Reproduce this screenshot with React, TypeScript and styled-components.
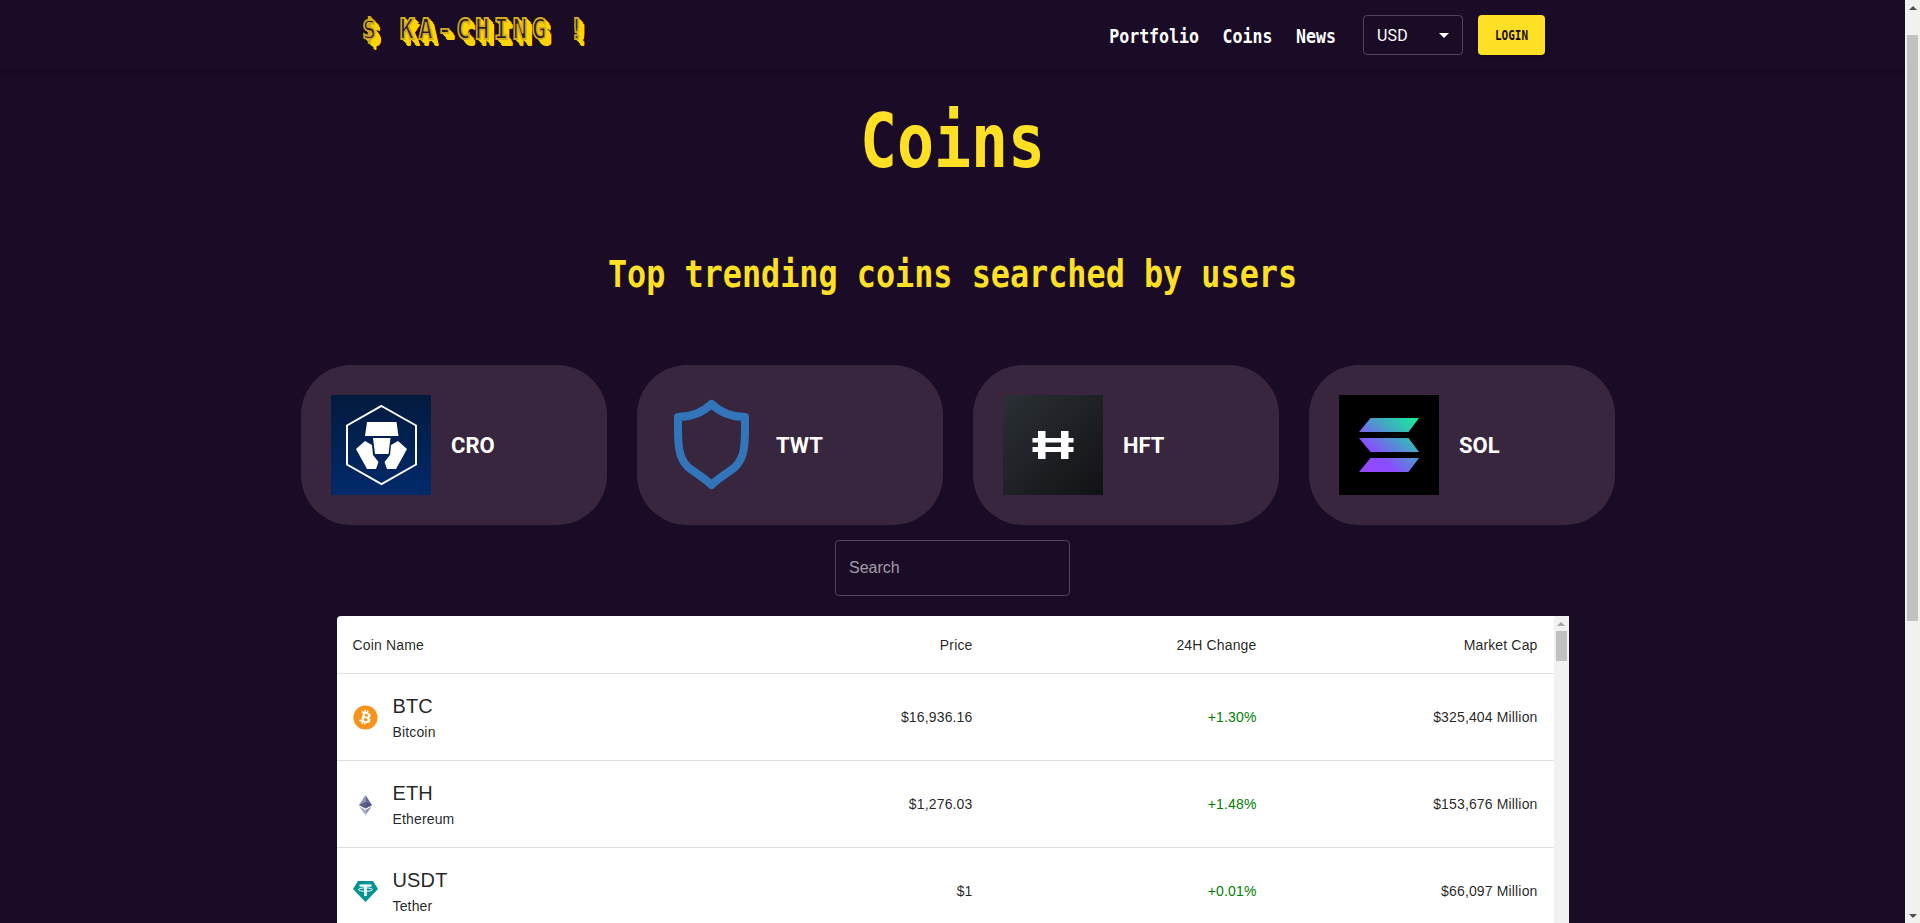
import React from "react";
import styled, { createGlobalStyle } from "styled-components";
import { FaBitcoin } from "react-icons/fa";

const Global = createGlobalStyle`
  html, body { height: 100%; }
  body { margin: 0; overflow: hidden; background: #1a0b26; font-family: "Liberation Sans", Arial, sans-serif; }
  * { box-sizing: border-box; }
`;

const PIXEL = `"DejaVu Sans Mono", "Liberation Mono", monospace`;
const YELLOW = "#ffe024";

const Shell = styled.div`
  height: 923px;
  display: flex;
  overflow: hidden;
`;

const Page = styled.div`
  flex: 1;
  min-width: 0;
  display: flex;
  flex-direction: column;
`;

const ScrollTrack = styled.div`
  flex: none;
  width: 15px;
  height: 100%;
  display: flex;
  flex-direction: column;
  align-items: center;
  background: #f1f1f1;
`;

const ArrowCell = styled.div`
  flex: none;
  width: 15px;
  height: 15px;
  display: flex;
  align-items: center;
  justify-content: center;
`;

const ArrowUp = styled.span<{ $color: string }>`
  width: 0;
  height: 0;
  border-left: 4px solid transparent;
  border-right: 4px solid transparent;
  border-bottom: 4px solid ${(p) => p.$color};
`;

const ArrowDown = styled.span<{ $color: string }>`
  width: 0;
  height: 0;
  border-left: 4px solid transparent;
  border-right: 4px solid transparent;
  border-top: 4px solid ${(p) => p.$color};
`;

const ThumbArea = styled.div`
  flex: 1;
  min-height: 0;
  align-self: stretch;
  display: flex;
  flex-direction: column;
  align-items: center;
`;

const Thumb = styled.div<{ $top: number; $height: number }>`
  flex: none;
  width: 11px;
  height: ${(p) => p.$height}px;
  margin-top: ${(p) => p.$top}px;
  background: #c1c1c1;
`;

const Header = styled.header`
  flex: none;
  height: 70px;
  display: flex;
  align-items: center;
  justify-content: space-between;
  padding: 0 360px 0 362px;
  background: #1a0b26;
  box-shadow: 0 2px 3px rgba(0, 0, 0, 0.18);
`;

const Logo = styled.div`
  font-family: ${PIXEL};
  font-weight: 700;
  font-size: 24px;
  letter-spacing: 4.4px;
  white-space: pre;
  color: #2a1a33;
  -webkit-text-stroke: 1.5px #d4ab1f;
  text-shadow: 1px 0 0 #ffd500, 1px 1px 0 #ffd500, 2px 1px 0 #ffd500, 2px 2px 0 #ffd500, 3px 2px 0 #ffd500, 3px 3px 0 #ffd500,
    4px 3px 0 #ffd500, 4px 4px 0 #ffd500, 5px 4px 0 #ffd500, 5px 5px 0 #ffd500, 6px 5px 0 #ffd500, 6px 6px 0 #ffd500;
  transform: scaleY(1.2) translateY(-5px);
`;

const Actions = styled.div`
  display: flex;
  align-items: center;
`;

const Nav = styled.nav`
  display: flex;
  gap: 23.5px;
  margin-right: 27px;
`;

const NavLink = styled.a`
  font-family: ${PIXEL};
  font-weight: 700;
  font-size: 16.6px;
  color: #fff;
  display: inline-block;
  transform: scaleY(1.16);
  margin-top: 2px;
`;

const CurrencySelect = styled.button`
  width: 100px;
  height: 40px;
  display: flex;
  align-items: center;
  justify-content: space-between;
  padding: 0 14px 0 13px;
  background: transparent;
  border: 1px solid rgba(255, 255, 255, 0.23);
  border-radius: 4px;
  color: #fff;
  font: 400 16px Roboto, sans-serif;
  letter-spacing: 0.15px;
  margin-right: 15px;
`;

const Caret = styled.span`
  width: 0;
  height: 0;
  border-left: 5px solid transparent;
  border-right: 5px solid transparent;
  border-top: 5px solid #fff;
  margin-right: -1px;
`;

const LoginButton = styled.button`
  width: 67px;
  height: 40px;
  border: 0;
  border-radius: 4px;
  background: ${YELLOW};
  color: #1a0b26;
  box-shadow: 0 2px 3px rgba(0, 0, 0, 0.25);
  font-family: ${PIXEL};
  font-weight: 700;
  font-size: 11px;
  padding: 0;
`;

const LoginLabel = styled.span`
  display: inline-block;
  transform: scaleY(1.25);
`;

const Main = styled.main`
  flex: 1;
  min-height: 0;
  display: flex;
  flex-direction: column;
  align-items: center;
  padding-top: 41px;
`;

const PageTitle = styled.h1`
  margin: 0 0 83px;
  font-family: ${PIXEL};
  font-weight: 700;
  font-size: 61.5px;
  line-height: 60px;
  color: ${YELLOW};
  transform: scaleY(1.22);
`;

const Subtitle = styled.h2`
  margin: 0 0 71px;
  font-family: ${PIXEL};
  font-weight: 700;
  font-size: 31.8px;
  line-height: 40px;
  white-space: nowrap;
  color: ${YELLOW};
  transform: scaleY(1.16);
`;

const Trending = styled.div`
  flex: none;
  display: flex;
  gap: 30px;
  margin-left: 11px;
  margin-bottom: 15px;
`;

const TrendCard = styled.div`
  width: 306px;
  height: 160px;
  padding: 30px;
  display: flex;
  align-items: center;
  gap: 20px;
  border-radius: 50px;
  background: #38263e;
`;

const TrendLogo = styled.svg<{ $w?: number }>`
  width: ${(p) => p.$w ?? 100}px;
  height: 100px;
  flex: none;
  display: block;
`;

const TrendSymbol = styled.span`
  font: 700 22px Roboto, sans-serif;
  color: #fff;
`;

const SearchInput = styled.input`
  flex: none;
  width: 235px;
  height: 56px;
  padding: 0 13px;
  margin-bottom: 20px;
  background: transparent;
  border: 1px solid rgba(255, 255, 255, 0.23);
  border-radius: 4px;
  color: #fff;
  font: 400 16px "Liberation Sans", sans-serif;
  &::placeholder {
    color: rgba(255, 255, 255, 0.6);
    opacity: 1;
  }
`;

const TableBox = styled.div`
  flex: none;
  width: 1232px;
  height: 528px;
  display: flex;
  overflow: hidden;
  background: #fff;
  border-radius: 4px 0 0 0;
`;

const Table = styled.table`
  flex: none;
  width: 1217px;
  height: 0;
  table-layout: fixed;
  border-collapse: collapse;
  color: rgba(0, 0, 0, 0.87);
  font-size: 14px;
  letter-spacing: 0.15px;
`;

const Column = styled.col<{ $w: number }>`
  width: ${(p) => p.$w}px;
`;

const Th = styled.th<{ $right?: boolean }>`
  height: 57px;
  padding: 17px 16px 15px;
  font-weight: 400;
  line-height: 24px;
  text-align: ${(p) => (p.$right ? "right" : "left")};
  border-bottom: 1px solid #e0e0e0;
`;

const Td = styled.td<{ $up?: boolean }>`
  height: 87px;
  padding: 16px;
  text-align: right;
  line-height: 20px;
  border-bottom: 1px solid #e0e0e0;
  color: ${(p) => (p.$up ? "green" : "inherit")};
`;

const NameCell = styled.td`
  height: 87px;
  padding: 16px;
  border-bottom: 1px solid #e0e0e0;
`;

const CoinRow = styled.div`
  display: flex;
  align-items: center;
  gap: 15px;
`;

const CoinIconBox = styled.span`
  width: 25px;
  height: 25px;
  flex: none;
  margin-top: 2px;
  display: flex;
  align-items: center;
  justify-content: center;
`;

const CoinSymbol = styled.div`
  font-size: 20px;
  line-height: 30px;
  padding-top: 1px;
`;

const CoinName = styled.div`
  font-size: 14px;
  line-height: 23px;
`;

const Scrollbar = ({ thumbTop, thumbHeight, upColor }: { thumbTop: number; thumbHeight: number; upColor: string }) => (
  <ScrollTrack>
    <ArrowCell>
      <ArrowUp $color={upColor} />
    </ArrowCell>
    <ThumbArea>
      <Thumb $top={thumbTop} $height={thumbHeight} />
    </ThumbArea>
    <ArrowCell>
      <ArrowDown $color="#505050" />
    </ArrowCell>
  </ScrollTrack>
);

const CroLogo = () => (
  <TrendLogo viewBox="0 0 100 100">
    <defs>
      <linearGradient id="cro" x1="0" y1="0" x2="0" y2="1">
        <stop offset="0" stopColor="#031a3d" />
        <stop offset="1" stopColor="#002a6b" />
      </linearGradient>
    </defs>
    <rect width="100" height="100" fill="url(#cro)" />
    <polygon points="50.5,11 85,30.5 85,69.5 50.5,89 16,69.5 16,30.5" fill="none" stroke="#fff" strokeWidth="2" />
    <polygon points="36,27 65.5,27 67.5,41 34,41" fill="#fff" />
    <polygon points="42,43 59.5,43 57.5,59 44,59" fill="#fff" />
    <polygon points="25,54 34,46 41,50 42,60 47.5,67 45,74 36,74" fill="#fff" />
    <polygon points="76,54 67,46 60,50 59,60 53.5,67 56,74 65,74" fill="#fff" />
  </TrendLogo>
);

const TwtLogo = () => (
  <TrendLogo $w={89} viewBox="0 0 89 100">
    <path
      d="M44.5 9 C36 17 24 22 11 22 C11 46 10 62 21 72 C28 78 38 83 44.5 90 C51 83 61 78 68 72 C79 62 78 46 78 22 C65 22 53 17 44.5 9 Z"
      fill="none"
      stroke="#3375bb"
      strokeWidth="8"
      strokeLinejoin="round"
    />
  </TrendLogo>
);

const HftLogo = () => (
  <TrendLogo viewBox="0 0 100 100">
    <defs>
      <linearGradient id="hft" x1="0" y1="0" x2="1" y2="1">
        <stop offset="0" stopColor="#2b3036" />
        <stop offset="1" stopColor="#111214" />
      </linearGradient>
    </defs>
    <rect width="100" height="100" fill="url(#hft)" />
    <g fill="#fff">
      <rect x="35" y="36" width="7.5" height="28" />
      <rect x="58" y="36" width="7.5" height="28" />
      <rect x="29.5" y="43" width="41" height="4.5" />
      <rect x="29.5" y="52" width="41" height="5" />
    </g>
  </TrendLogo>
);

const SolLogo = () => (
  <TrendLogo viewBox="0 0 100 100">
    <defs>
      <linearGradient id="sol" gradientUnits="userSpaceOnUse" x1="24" y1="80" x2="76" y2="20">
        <stop offset="0" stopColor="#9945ff" />
        <stop offset="0.3" stopColor="#8a4dff" />
        <stop offset="0.65" stopColor="#43a6c4" />
        <stop offset="1" stopColor="#14f195" />
      </linearGradient>
    </defs>
    <rect width="100" height="100" fill="#000" />
    <g fill="url(#sol)">
      <polygon points="31.5,23 80,23 69.5,37 20,37" />
      <polygon points="20,43 69.5,43 80,57 31.5,57" />
      <polygon points="31.5,63 80,63 69.5,77 20,77" />
    </g>
  </TrendLogo>
);

const EthIcon = () => (
  <svg width="13" height="20" viewBox="0 0 13 20">
    <polygon points="6.5,0 0,10 6.5,13.5" fill="#8a92b2" />
    <polygon points="6.5,0 13,10 6.5,13.5" fill="#62688f" />
    <polygon points="0,11.3 6.5,20 6.5,15" fill="#a5abc6" />
    <polygon points="13,11.3 6.5,20 6.5,15" fill="#8a92b2" />
    <polygon points="6.5,7 0,10 6.5,13.5 13,10" fill="#454a75" opacity="0.7" />
  </svg>
);

const TetherIcon = () => (
  <svg width="25" height="21" viewBox="0 0 25 21">
    <polygon points="5,0 20,0 25,8 12.5,21 0,8" fill="#009393" />
    <g fill="#fff">
      <rect x="6.5" y="3.5" width="12" height="2.2" />
      <rect x="11.2" y="3.5" width="2.6" height="11.5" />
      <ellipse cx="12.5" cy="8.6" rx="7" ry="1.7" fill="none" stroke="#fff" strokeWidth="1" />
    </g>
  </svg>
);

const trending = [
  { symbol: "CRO", logo: <CroLogo /> },
  { symbol: "TWT", logo: <TwtLogo /> },
  { symbol: "HFT", logo: <HftLogo /> },
  { symbol: "SOL", logo: <SolLogo /> },
];

const coins = [
  { symbol: "BTC", name: "Bitcoin", price: "$16,936.16", change: "+1.30%", cap: "$325,404 Million", icon: <FaBitcoin size={25} color="#f7931a" /> },
  { symbol: "ETH", name: "Ethereum", price: "$1,276.03", change: "+1.48%", cap: "$153,676 Million", icon: <EthIcon /> },
  { symbol: "USDT", name: "Tether", price: "$1", change: "+0.01%", cap: "$66,097 Million", icon: <TetherIcon /> },
];

export default function App() {
  return (
    <Shell>
      <Global />
      <Page>
        <Header>
          <Logo>$ KA-CHING !</Logo>
          <Actions>
            <Nav>
              <NavLink>Portfolio</NavLink>
              <NavLink>Coins</NavLink>
              <NavLink>News</NavLink>
            </Nav>
            <CurrencySelect>
              USD
              <Caret />
            </CurrencySelect>
            <LoginButton>
              <LoginLabel>LOGIN</LoginLabel>
            </LoginButton>
          </Actions>
        </Header>
        <Main>
          <PageTitle>Coins</PageTitle>
          <Subtitle>Top trending coins searched by users</Subtitle>
          <Trending>
            {trending.map((t) => (
              <TrendCard key={t.symbol}>
                {t.logo}
                <TrendSymbol>{t.symbol}</TrendSymbol>
              </TrendCard>
            ))}
          </Trending>
          <SearchInput placeholder="Search" />
          <TableBox>
            <Table>
              <colgroup>
                <Column $w={401} />
                <Column $w={251} />
                <Column $w={284} />
                <Column $w={281} />
              </colgroup>
              <thead>
                <tr>
                  <Th>Coin Name</Th>
                  <Th $right>Price</Th>
                  <Th $right>24H Change</Th>
                  <Th $right>Market Cap</Th>
                </tr>
              </thead>
              <tbody>
                {coins.map((c) => (
                  <tr key={c.symbol}>
                    <NameCell>
                      <CoinRow>
                        <CoinIconBox>{c.icon}</CoinIconBox>
                        <div>
                          <CoinSymbol>{c.symbol}</CoinSymbol>
                          <CoinName>{c.name}</CoinName>
                        </div>
                      </CoinRow>
                    </NameCell>
                    <Td>{c.price}</Td>
                    <Td $up>{c.change}</Td>
                    <Td>{c.cap}</Td>
                  </tr>
                ))}
              </tbody>
            </Table>
            <Scrollbar thumbTop={0} thumbHeight={30} upColor="#a3a3a3" />
          </TableBox>
        </Main>
      </Page>
      <Scrollbar thumbTop={20} thumbHeight={586} upColor="#505050" />
    </Shell>
  );
}
